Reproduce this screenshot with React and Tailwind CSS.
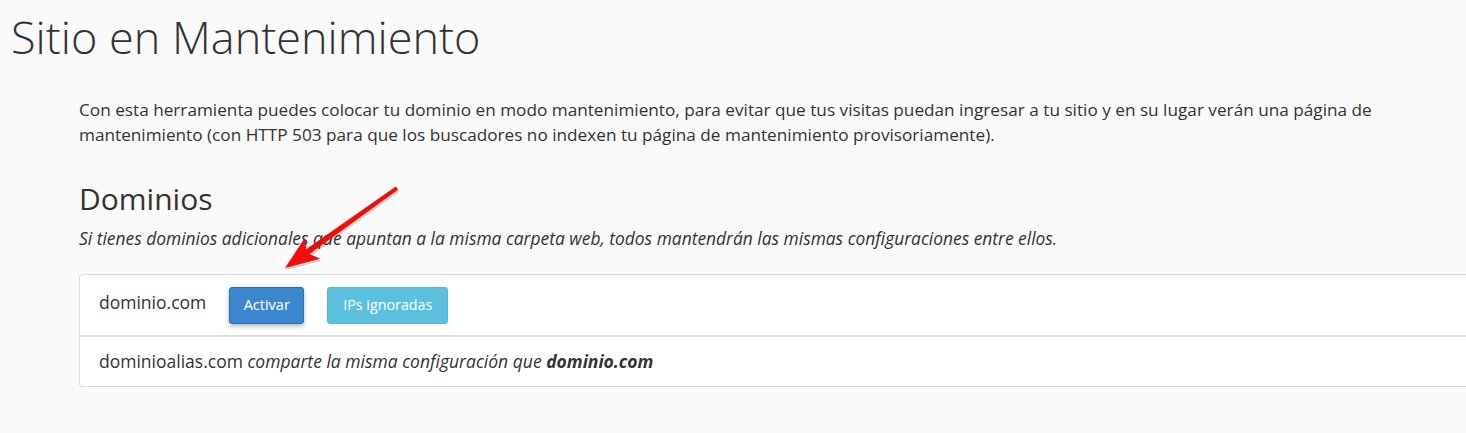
import React from 'react'

const Arrow = () => (
  <svg className="absolute left-0 top-0 pointer-events-none" width="1466" height="433" viewBox="0 0 1466 433">
    <polygon
      points="396.8,188.4 307.1,251.3 306.1,239.6 286,270 321.3,260.8 310.5,256.1 399.2,191.6"
      fill="#000" opacity="0.18" />
    <polygon
      points="395.8,186.4 306.1,249.3 305.1,237.6 285,268 320.3,258.8 309.5,254.1 398.2,189.6"
      fill="#f20d0d" />
  </svg>
)

const App = () => {
  return (
    <div className="relative min-h-[433px] w-full bg-[#fafafa] text-[#333] overflow-hidden" style={{ fontFamily: '"Open Sans", "Liberation Sans", sans-serif' }}>
      <h1 className="pl-[11px] pt-[7px] text-[45px] font-light leading-[60px] text-[#333]">Sitio en Mantenimiento</h1>

      <div className="pl-[79px] pt-[30px]">
        <p className="text-[17.2px] leading-[25px] max-w-[1320px]">
          Con esta herramienta puedes colocar tu dominio en modo mantenimiento, para evitar que tus visitas puedan ingresar a tu sitio y en su lugar verán una página de mantenimiento (con HTTP 503 para que los buscadores no indexen tu página de mantenimiento provisoriamente).
        </p>

        <h2 className="mt-[34px] text-[30px] leading-[36px]">Dominios</h2>
        <p className="mt-[10px] text-[17.4px] leading-[22px] italic">
          Si tienes dominios adicionales que apuntan a la misma carpeta web, todos mantendrán las mismas configuraciones entre ellos.
        </p>

        <div className="mt-[25px] bg-white border border-[#ddd] border-r-0 rounded-l-[4px]">
          <div className="flex items-center h-[62px] px-[19px] border-b-2 border-[#ddd]">
            <span className="text-[17.5px] mt-[-6px]">dominio.com</span>
            <button className="ml-[23px] h-[37px] w-[75px] rounded-[3px] bg-[#3a87cd] border border-[#2f6ea8] text-white text-[14.5px] shadow-[0_2px_5px_rgba(0,0,0,0.3)]">
              Activar
            </button>
            <button className="ml-[23px] h-[37px] w-[121px] rounded-[3px] bg-[#5bc0de] border border-[#55b8d6] text-white text-[14.3px]">
              IPs ignoradas
            </button>
          </div>
          <div className="flex items-center h-[49px] px-[19px] text-[17.5px]">
            <span>dominioalias.com <em>comparte la misma configuración que</em> <strong className="italic font-bold">dominio.com</strong></span>
          </div>
        </div>
      </div>

      <Arrow />
    </div>
  )
}

export default App
